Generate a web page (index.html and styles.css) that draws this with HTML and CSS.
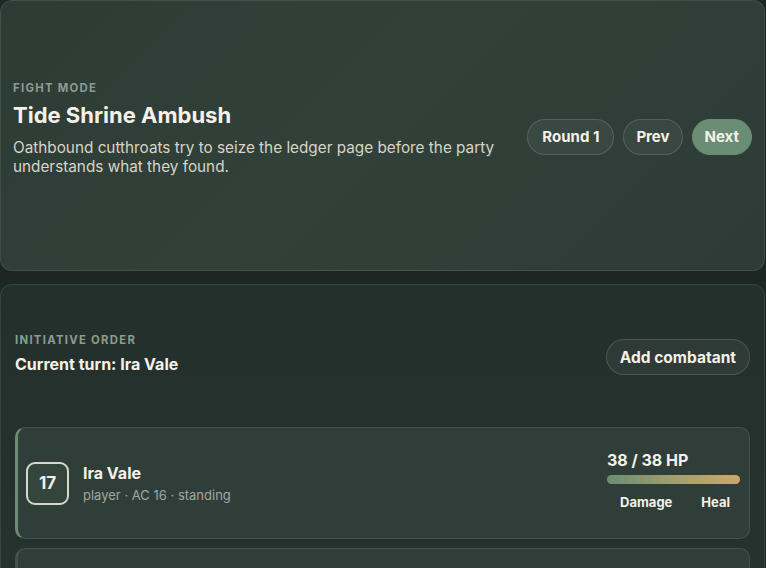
FILE: index.html
```html
<!DOCTYPE html>
<html lang="en">
<head>
    <meta charset="UTF-8">
    <meta name="viewport" content="width=device-width, initial-scale=1.0">
    <title>Fight Mode - Tide Shrine Ambush</title>
    <link rel="stylesheet" href="styles.css">
</head>
<body>
    <div class="page">
        <section class="card encounter">
            <div class="encounter-info">
                <div class="eyebrow">Fight mode</div>
                <h1 class="encounter-title">Tide Shrine Ambush</h1>
                <p class="encounter-desc">Oathbound cutthroats try to seize the ledger page before the party understands what they found.</p>
            </div>
            <div class="round-controls">
                <button class="pill pill-round">Round 1</button>
                <button class="pill">Prev</button>
                <button class="pill pill-primary">Next</button>
            </div>
        </section>

        <section class="card tracker">
            <div class="tracker-head">
                <div>
                    <div class="eyebrow">Initiative order</div>
                    <div class="current-turn">Current turn: Ira Vale</div>
                </div>
                <button class="pill pill-wide">Add combatant</button>
            </div>

            <div class="combatants">
                <div class="combatant active">
                    <div class="initiative">17</div>
                    <div class="combatant-info">
                        <div class="combatant-name">Ira Vale</div>
                        <div class="combatant-meta">player · AC 16 · standing</div>
                    </div>
                    <div class="hp">
                        <div class="hp-label">38 / 38 HP</div>
                        <div class="hp-bar"><div class="hp-fill" style="width: 100%"></div></div>
                        <div class="hp-actions">
                            <button class="text-btn">Damage</button>
                            <button class="text-btn">Heal</button>
                        </div>
                    </div>
                </div>
                <div class="combatant">
                    <div class="initiative">14</div>
                    <div class="combatant-info">
                        <div class="combatant-name">Oathbound Cutthroat</div>
                        <div class="combatant-meta">enemy · AC 13 · standing</div>
                    </div>
                    <div class="hp">
                        <div class="hp-label">11 / 11 HP</div>
                        <div class="hp-bar"><div class="hp-fill" style="width: 100%"></div></div>
                        <div class="hp-actions">
                            <button class="text-btn">Damage</button>
                            <button class="text-btn">Heal</button>
                        </div>
                    </div>
                </div>
            </div>
        </section>
    </div>
</body>
</html>
```

FILE: styles.css
```css
* {
    box-sizing: border-box;
    font-family: Inter, "Noto Sans", sans-serif;
}

body {
    margin: 0;
    background-color: #1c2622;
    color: #f3efe6;
    overflow: hidden;
}

.page {
    display: flex;
    flex-direction: column;
    gap: 13px;
    width: 765px;
}

.card {
    border: 1px solid rgba(255, 255, 255, 0.09);
    border-radius: 12px;
}

.encounter {
    display: flex;
    align-items: center;
    justify-content: space-between;
    gap: 24px;
    height: 271px;
    padding: 0 12px;
    background: linear-gradient(135deg, #2d3b35 0%, #31413a 45%, #2d3c36 100%);
}

.encounter-info {
    margin-bottom: 14px;
}

.eyebrow {
    font-size: 11.3px;
    font-weight: 700;
    letter-spacing: 1.3px;
    text-transform: uppercase;
    color: #8c9c91;
}

.encounter-title {
    margin: 7px 0 10px;
    font-size: 22px;
    font-weight: 700;
    color: #f5f1e8;
}

.encounter-desc {
    margin: 0;
    max-width: 500px;
    font-size: 15.3px;
    line-height: 19px;
    color: #d8d4c8;
}

.round-controls {
    display: flex;
    gap: 9px;
    margin-top: 2px;
}

.pill {
    height: 36px;
    padding: 0 12px;
    border: 1px solid rgba(255, 255, 255, 0.14);
    border-radius: 999px;
    background-color: rgba(255, 255, 255, 0.05);
    color: #f5f1e8;
    font-size: 15px;
    font-weight: 700;
    white-space: nowrap;
    cursor: pointer;
}

.pill-round {
    padding: 0 14px;
}

.pill-primary {
    border-color: #6b8d75;
    background-color: #6b8d75;
}

.pill-wide {
    padding: 0 13px;
    font-size: 15.5px;
    align-self: flex-end;
    margin-bottom: -1px;
}

.tracker {
    min-height: 300px;
    padding: 48px 14px 0 14px;
    background: linear-gradient(180deg, #24302c 0%, #25322d 100%);
}

.tracker-head {
    display: flex;
    align-items: center;
    justify-content: space-between;
}

.current-turn {
    margin-top: 7px;
    font-size: 16px;
    font-weight: 700;
    color: #f5f1e8;
}

.combatants {
    display: flex;
    flex-direction: column;
    gap: 9px;
    margin-top: 53px;
}

.combatant {
    display: flex;
    flex-shrink: 0;
    align-items: center;
    gap: 14px;
    height: 112px;
    padding: 0 9px 0 8px;
    border: 1px solid rgba(255, 255, 255, 0.1);
    border-left-width: 3px;
    border-radius: 10px;
    background-color: #2f3e38;
}

.combatant.active {
    border-left-color: #6b8d75;
}

.initiative {
    display: flex;
    align-items: center;
    justify-content: center;
    width: 43px;
    height: 43px;
    border: 2px solid #d9d6cc;
    border-radius: 9px;
    background-color: #34453e;
    font-size: 17px;
    font-weight: 700;
}

.combatant-info {
    flex: 1;
}

.combatant-name {
    font-size: 16px;
    font-weight: 700;
    color: #f5f1e8;
}

.combatant-meta {
    margin-top: 4px;
    font-size: 13px;
    color: #9fa9a1;
}

.hp {
    width: 133px;
    margin-top: -6px;
}

.hp-label {
    font-size: 16px;
    font-weight: 700;
    color: #f5f1e8;
}

.hp-bar {
    height: 9px;
    margin-top: 5px;
    border-radius: 999px;
    background-color: rgba(255, 255, 255, 0.08);
}

.hp-fill {
    height: 100%;
    border-radius: 999px;
    background: linear-gradient(90deg, #6b8d75 0%, #a5a06c 55%, #cda866 100%);
}

.hp-actions {
    display: flex;
    justify-content: flex-end;
    gap: 9px;
    margin-top: 10px;
}

.text-btn {
    padding: 0 10px;
    border: none;
    background: none;
    color: #f5f1e8;
    font-size: 13px;
    font-weight: 700;
    cursor: pointer;
}
```
